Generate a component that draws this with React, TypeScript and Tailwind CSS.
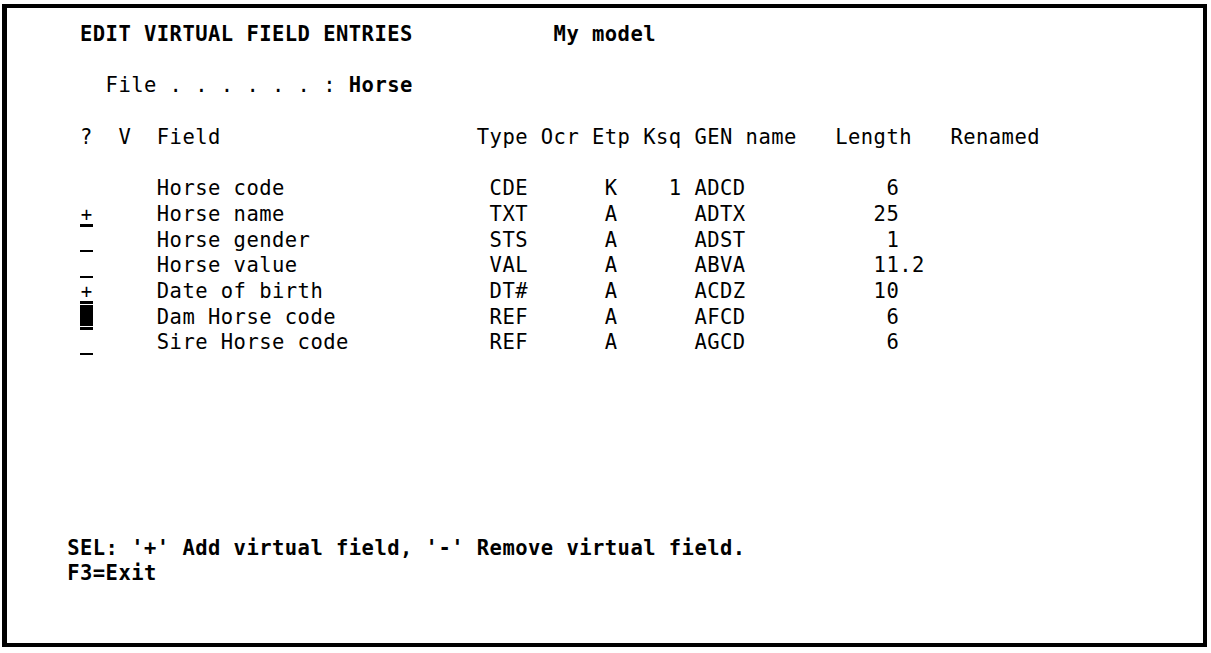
import React from "react";

type Mark = "none" | "plus" | "empty" | "cursor";

type Entry = {
  mark: Mark;
  field: string;
  type: string;
  etp: string;
  ksq: string;
  gen: string;
  length: string;
};

const entries: Entry[] = [
  { mark: "none", field: "Horse code", type: "CDE", etp: "K", ksq: "1", gen: "ADCD", length: " 6" },
  { mark: "plus", field: "Horse name", type: "TXT", etp: "A", ksq: "", gen: "ADTX", length: "25" },
  { mark: "empty", field: "Horse gender", type: "STS", etp: "A", ksq: "", gen: "ADST", length: " 1" },
  { mark: "empty", field: "Horse value", type: "VAL", etp: "A", ksq: "", gen: "ABVA", length: "11.2" },
  { mark: "plus", field: "Date of birth", type: "DT#", etp: "A", ksq: "", gen: "ACDZ", length: "10" },
  { mark: "cursor", field: "Dam Horse code", type: "REF", etp: "A", ksq: "", gen: "AFCD", length: " 6" },
  { mark: "empty", field: "Sire Horse code", type: "REF", etp: "A", ksq: "", gen: "AGCD", length: " 6" },
];

// text from column 1 onwards, padded to the 5250 screen columns
const rowText = (e: Entry) =>
  ("     " + e.field).padEnd(31) +
  e.type.padEnd(9) +
  e.etp.padEnd(5) +
  e.ksq.padEnd(2) +
  e.gen.padEnd(14) +
  e.length;

const Line = ({ children, className = "" }: { children?: React.ReactNode; className?: string }) => (
  <div className={`flex h-[25.7px] leading-[25.7px] whitespace-pre ${className}`}>{children}</div>
);

const InputCell = ({ mark }: { mark: Mark }) => {
  if (mark === "none") return <div className="w-[12.8px] shrink-0" />;
  return (
    <div className="w-[12.8px] h-[25.7px] shrink-0 flex flex-col">
      <div className="h-[22.6px] flex items-center justify-center">
        {mark === "plus" && (
          <span className="text-[19px] leading-none pt-[3px] tracking-normal">+</span>
        )}
        {mark === "cursor" && <div className="w-full h-[21px] self-start bg-black" />}
      </div>
      <div className="h-[2.4px] bg-black" />
    </div>
  );
};

const App = () => {
  return (
    <div className="w-[1211px] h-[653px] bg-white pl-[2px] pt-[4px]">
      <div className="w-[1205px] h-[643px] border-4 border-l-[5px] border-black bg-white pt-[14px] pl-[73px] text-black font-['DejaVu_Sans_Mono',monospace] text-[20.5px] tracking-[0.458px]">
        {/* header */}
        <Line className="font-bold">
          {"EDIT VIRTUAL FIELD ENTRIES".padEnd(37)}My model
        </Line>
        <Line />
        <Line>
          {"  File . . . . . . : "}
          <span className="font-bold">Horse</span>
        </Line>
        <Line />
        <Line>
          {"?  V  Field".padEnd(31)}Type Ocr Etp Ksq GEN name   Length   Renamed
        </Line>
        <Line />
        {/* subfile rows */}
        {entries.map((e) => (
          <Line key={e.gen}>
            <InputCell mark={e.mark} />
            <span>{rowText(e)}</span>
          </Line>
        ))}
        {[0, 1, 2, 3, 4, 5, 6].map((i) => (
          <Line key={i} />
        ))}
        {/* function keys */}
        <Line className="font-bold -ml-[12.8px]">
          SEL: '+' Add virtual field, '-' Remove virtual field.
        </Line>
        <Line className="font-bold -ml-[12.8px]">F3=Exit</Line>
      </div>
    </div>
  );
};

export default App;
